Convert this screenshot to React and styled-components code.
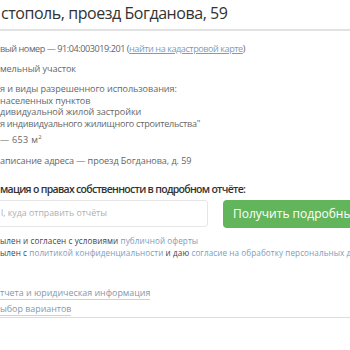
import styled, { createGlobalStyle } from 'styled-components';

const Global = createGlobalStyle`
  html, body {
    margin: 0;
    padding: 0;
    background: #fff;
    overflow: hidden;
  }
  body {
    font-family: 'Open Sans', 'Noto Sans', sans-serif;
    color: #555;
  }
`;

const Page = styled.div`
  width: 350px;
  height: 350px;
  overflow: hidden;
`;

const Header = styled.div`
  padding: 1px 0 0 1px;
  height: 28px;
  border-bottom: 2px solid #e2e2e2;
`;

const Title = styled.h1`
  margin: 0;
  font-size: 16px;
  font-weight: 400;
  letter-spacing: -0.45px;
  line-height: 24px;
  color: #333;
  white-space: nowrap;
`;

const Body = styled.div`
  padding-top: 12px;
`;

const Line = styled.div`
  font-size: 9.1px;
  line-height: 11.5px;
  letter-spacing: ${(p) => p.tight ?? -0.08}px;
  color: #666;
  white-space: nowrap;
  margin-top: ${(p) => p.gap || 0}px;
`;

const Link = styled.a`
  color: #7b9dbd;
  text-decoration: ${(p) => (p.underline ? 'underline' : 'none')};
`;

const Sup = styled.sup`
  font-size: 6px;
  line-height: 0;
`;

const Heading = styled.div`
  margin-top: 15px;
  font-size: 10.5px;
  font-weight: 600;
  letter-spacing: -0.7px;
  color: #333;
  white-space: nowrap;
  line-height: 14px;
`;

const Form = styled.div`
  display: flex;
  gap: 15px;
  margin-top: 4px;
  margin-left: -20px;
`;

const Input = styled.div`
  flex: none;
  width: 228px;
  height: 27px;
  border: 1px solid #e6e6e6;
  border-radius: 3px;
  display: flex;
  align-items: center;
  padding-left: 20px;
  box-sizing: border-box;
  font-size: 8.8px;
  color: #b0b0b0;
  white-space: nowrap;
`;

const Button = styled.div`
  flex: none;
  width: 150px;
  height: 28px;
  border-radius: 4px;
  background: #63b55c;
  color: #fff;
  font-size: 12px;
  display: flex;
  align-items: center;
  padding-left: 10px;
  box-sizing: border-box;
  white-space: nowrap;
`;

const Note = styled.div`
  font-size: 8.1px;
  line-height: 12px;
  letter-spacing: 0.1px;
  color: #444;
  white-space: nowrap;
  margin-top: ${(p) => p.gap || 0}px;
`;

const Footer = styled.div`
  margin-top: 26px;
  border-bottom: 1px solid #dcdcdc;
`;

const FootLink = styled.div`
  font-size: 8.9px;
  line-height: 16px;
  white-space: nowrap;

  span {
    color: #7f98ad;
    border-bottom: 1px solid #c9d3dc;
  }
`;

export default function App() {
  return (
    <Page>
      <Global />
      <Header>
        <Title>стополь, проезд Богданова, 59</Title>
      </Header>
      <Body>
        <Line tight={-0.45}>
          вый номер — 91:04:003019:201 (<Link underline>найти на кадастровой карте</Link>)
        </Line>
        <Line gap={8.5}>мельный участок</Line>
        <Line gap={8.5}>я и виды разрешенного использования:</Line>
        <Line>населенных пунктов</Line>
        <Line>дивидуальной жилой застройки</Line>
        <Line tight={-0.28}>я индивидуального жилищного строительства"</Line>
        <Line gap={5} tight={0.3}>
          — 653 м<Sup>2</Sup>
        </Line>
        <Line gap={9.5}>аписание адреса — проезд Богданова, д. 59</Line>
        <Heading>мация о правах собственности в подробном отчёте:</Heading>
        <Form>
          <Input>l, куда отправить отчёты</Input>
          <Button>Получить подробный</Button>
        </Form>
        <Note gap={7}>
          ылен и согласен с условиями <Link>публичной оферты</Link>
        </Note>
        <Note>
          ылен с <Link>политикой конфиденциальности</Link> и даю{' '}
          <Link>согласие на обработку персональных данных</Link>
        </Note>
        <Footer>
          <FootLink>
            <span>тчета и юридическая информация</span>
          </FootLink>
          <FootLink>
            <span>ыбор вариантов</span>
          </FootLink>
        </Footer>
      </Body>
    </Page>
  );
}
